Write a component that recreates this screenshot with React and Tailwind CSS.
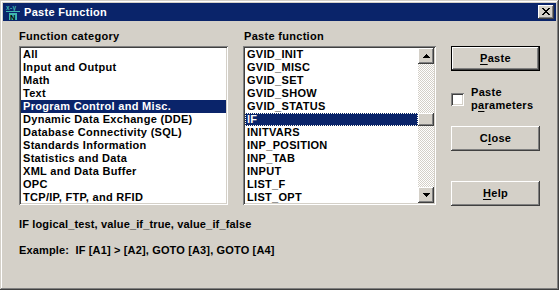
import React from "react";

const sunken =
  "shadow-[inset_1px_1px_#808080,inset_-1px_-1px_#ffffff,inset_2px_2px_#404040,inset_-2px_-2px_#d4d0c8]";
const raised =
  "shadow-[inset_-1px_-1px_#404040,inset_1px_1px_#ffffff,inset_-2px_-2px_#808080,inset_2px_2px_#d4d0c8]";

function Row({ text, selected, focus }) {
  return (
    <div
      className={
        "h-[13px] leading-[13px] pl-[2px] whitespace-nowrap " +
        (selected ? "bg-[#0a246a] text-white " : "") +
        (focus ? "outline-1 outline-dotted -outline-offset-1 outline-[#fffff0]" : "")
      }
    >
      {text}
    </div>
  );
}

function Arrow({ down }) {
  return (
    <svg width="7" height="4" viewBox="0 0 7 4" shapeRendering="crispEdges">
      {down ? (
        <polygon points="0,0 7,0 3.5,4" fill="#000" />
      ) : (
        <polygon points="3.5,0 7,4 0,4" fill="#000" />
      )}
    </svg>
  );
}

function Button({ children, isDefault, className = "" }) {
  return (
    <div
      className={
        "h-[25px] w-[89px] flex items-center justify-center " +
        (isDefault ? "border border-black " : "") +
        className
      }
    >
      <div className={"w-full h-full flex items-center justify-center " + raised}>
        <span className="leading-[13px]">{children}</span>
      </div>
    </div>
  );
}

export default function App() {
  const categories = [
    "All",
    "Input and Output",
    "Math",
    "Text",
    "Program Control and Misc.",
    "Dynamic Data Exchange (DDE)",
    "Database Connectivity (SQL)",
    "Standards Information",
    "Statistics and Data",
    "XML and Data Buffer",
    "OPC",
    "TCP/IP, FTP, and RFID",
  ];
  const funcs = [
    "GVID_INIT",
    "GVID_MISC",
    "GVID_SET",
    "GVID_SHOW",
    "GVID_STATUS",
    "IF",
    "INITVARS",
    "INP_POSITION",
    "INP_TAB",
    "INPUT",
    "LIST_F",
    "LIST_OPT",
  ];

  return (
    <div
      className={
        "w-[559px] h-[290px] bg-[#d4d0c8] p-[3px] flex flex-col text-black text-[11px] font-bold tracking-[0.3px] font-['Liberation_Sans',Arial,sans-serif] " +
        "shadow-[inset_-1px_-1px_#404040,inset_1px_1px_#d4d0c8,inset_-2px_-2px_#808080,inset_2px_2px_#ffffff]"
      }
    >
      {/* Title bar */}
      <div className="h-[18px] bg-[#0a246a] flex items-center shrink-0">
        <svg width="16" height="16" viewBox="0 0 16 16" className="ml-[2px]">
          <text x="1" y="6" fontSize="6.5" fontWeight="bold" fill="#3fb8b0" fontFamily="Liberation Sans, sans-serif">x-y</text>
          <rect x="1" y="7" width="14" height="1" fill="#3fb8b0" />
          <rect x="4" y="9" width="8" height="7" fill="#3fb8b0" />
          <text x="5" y="15.5" fontSize="7.5" fontWeight="bold" fill="#000" fontFamily="Liberation Sans, sans-serif">N</text>
        </svg>
        <span className="ml-[3px] text-white leading-[13px]">Paste Function</span>
        <div className="ml-auto mr-[2px] w-[16px] h-[14px] bg-[#d4d0c8] flex items-center justify-center shadow-[inset_-1px_-1px_#404040,inset_1px_1px_#ffffff,inset_-2px_-2px_#808080,inset_2px_2px_#d4d0c8]">
          <svg width="8" height="7" viewBox="0 0 8 7" shapeRendering="crispEdges" className="mb-[1px]">
            <path d="M0 0h2v1h-2zM6 0h2v1h-2zM1 1h2v1h-2zM5 1h2v1h-2zM2 2h4v1h-4zM3 3h2v1h-2zM2 4h4v1h-4zM1 5h2v1h-2zM5 5h2v1h-2zM0 6h2v1h-2zM6 6h2v1h-2z" fill="#000" />
          </svg>
        </div>
      </div>

      {/* Main */}
      <div className="flex pl-[16px] pt-[9px]">
        {/* Category list */}
        <div className="w-[209px]">
          <div className="h-[13px] leading-[13px]">Function category</div>
          <div className={"mt-[3px] h-[159px] bg-white p-[2px] overflow-hidden " + sunken}>
            {categories.map((c, i) => (
              <Row key={c} text={c} selected={i === 4} />
            ))}
          </div>
        </div>

        {/* Function list */}
        <div className="ml-[15px] w-[193px]">
          <div className="h-[13px] leading-[13px] pl-[1px]">Paste function</div>
          <div className={"mt-[3px] h-[159px] bg-white p-[2px] flex " + sunken}>
            <div className="flex-1 overflow-hidden">
              {funcs.map((f, i) => (
                <Row key={f} text={f} selected={i === 5} focus={i === 5} />
              ))}
            </div>
            <div className="w-[16px] flex flex-col">
              <div className={"h-[16px] bg-[#d4d0c8] flex items-center justify-center " + raised}>
                <Arrow />
              </div>
              <div className="flex-1 bg-[repeating-conic-gradient(#ffffff_0_25%,#d4d0c8_0_50%)] bg-[length:2px_2px] pt-[49px]">
                <div className={"h-[13px] bg-[#d4d0c8] " + raised}></div>
              </div>
              <div className={"h-[16px] bg-[#d4d0c8] flex items-center justify-center " + raised}>
                <Arrow down />
              </div>
            </div>
          </div>
        </div>

        {/* Buttons */}
        <div className="ml-[15px] w-[89px] pt-[16px] flex flex-col">
          <Button isDefault>
            <span className="underline underline-offset-[2px]">P</span>aste
          </Button>
          <div className="mt-[15px] flex items-start">
            <div className={"mt-[7px] w-[13px] h-[13px] bg-white shrink-0 " + sunken}></div>
            <div className="ml-[7px] leading-[13px]">
              <div>Paste</div>
              <div>
                p<span className="underline underline-offset-[2px]">a</span>rameters
              </div>
            </div>
          </div>
          <Button className="mt-[14px]">
            C<span className="underline underline-offset-[2px]">l</span>ose
          </Button>
          <Button className="mt-[30px]">
            <span className="underline underline-offset-[2px]">H</span>elp
          </Button>
        </div>
      </div>

      {/* Description */}
      <div className="pl-[16px] mt-[12px] tracking-[0.15px]">
        <div className="h-[13px] leading-[13px]">IF logical_test, value_if_true, value_if_false</div>
        <div className="h-[13px] leading-[13px] mt-[13px]">Example:&nbsp; IF [A1] &gt; [A2], GOTO [A3], GOTO [A4]</div>
      </div>
    </div>
  );
}
